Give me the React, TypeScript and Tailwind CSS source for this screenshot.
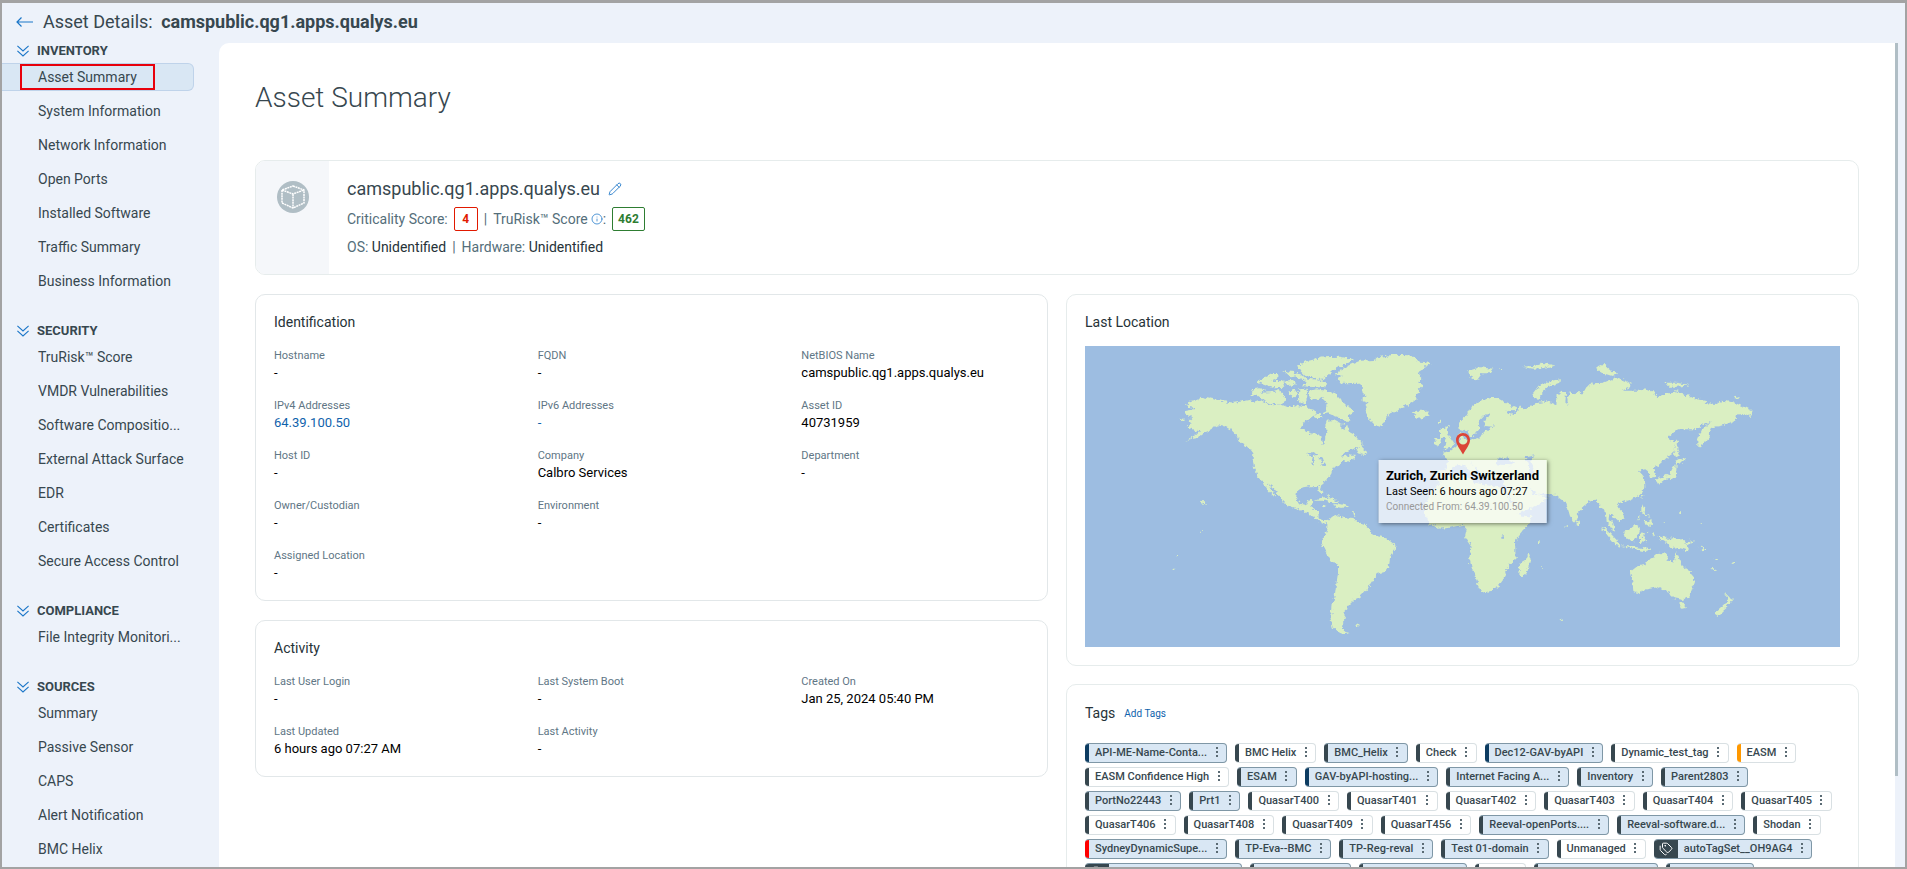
import { useState } from "react"
import { Info, Pencil, Tags as TagsIcon } from "lucide-react"

type NavGroup = { title: string; items: string[] }
type FieldItem = { label: string; value: string; link?: boolean }
type TagItem = { name: string; filled?: boolean; bar?: string; icon?: boolean }

const navGroups: NavGroup[] = [
  {
    title: "INVENTORY",
    items: [
      "Asset Summary",
      "System Information",
      "Network Information",
      "Open Ports",
      "Installed Software",
      "Traffic Summary",
      "Business Information",
    ],
  },
  {
    title: "SECURITY",
    items: [
      "TruRisk™ Score",
      "VMDR Vulnerabilities",
      "Software Compositio...",
      "External Attack Surface",
      "EDR",
      "Certificates",
      "Secure Access Control",
    ],
  },
  { title: "COMPLIANCE", items: ["File Integrity Monitori..."] },
  { title: "SOURCES", items: ["Summary", "Passive Sensor", "CAPS", "Alert Notification", "BMC Helix"] },
]

const identification: FieldItem[] = [
  { label: "Hostname", value: "-" },
  { label: "FQDN", value: "-" },
  { label: "NetBIOS Name", value: "camspublic.qg1.apps.qualys.eu" },
  { label: "IPv4 Addresses", value: "64.39.100.50", link: true },
  { label: "IPv6 Addresses", value: "-", link: true },
  { label: "Asset ID", value: "40731959" },
  { label: "Host ID", value: "-" },
  { label: "Company", value: "Calbro Services" },
  { label: "Department", value: "-" },
  { label: "Owner/Custodian", value: "-" },
  { label: "Environment", value: "-" },
  { label: "", value: "" },
  { label: "Assigned Location", value: "-" },
]

const activity: FieldItem[] = [
  { label: "Last User Login", value: "-" },
  { label: "Last System Boot", value: "-" },
  { label: "Created On", value: "Jan 25, 2024 05:40 PM" },
  { label: "Last Updated", value: "6 hours ago 07:27 AM" },
  { label: "Last Activity", value: "-" },
]

const tags: TagItem[] = [
  { name: "API-ME-Name-Conta...", filled: true, bar: "bg-[#0d3c61]" },
  { name: "BMC Helix" },
  { name: "BMC_Helix", filled: true },
  { name: "Check" },
  { name: "Dec12-GAV-byAPI", filled: true, bar: "bg-[#0d3c61]" },
  { name: "Dynamic_test_tag" },
  { name: "EASM", bar: "bg-[#ff9800]" },
  { name: "EASM Confidence High" },
  { name: "ESAM", filled: true },
  { name: "GAV-byAPI-hosting...", filled: true, bar: "bg-[#0d3c61]" },
  { name: "Internet Facing A...", filled: true },
  { name: "Inventory", filled: true },
  { name: "Parent2803", filled: true },
  { name: "PortNo22443", filled: true },
  { name: "Prt1", filled: true },
  { name: "QuasarT400" },
  { name: "QuasarT401" },
  { name: "QuasarT402" },
  { name: "QuasarT403" },
  { name: "QuasarT404" },
  { name: "QuasarT405" },
  { name: "QuasarT406" },
  { name: "QuasarT408" },
  { name: "QuasarT409" },
  { name: "QuasarT456" },
  { name: "Reeval-openPorts....", filled: true },
  { name: "Reeval-software.d...", filled: true },
  { name: "Shodan" },
  { name: "SydneyDynamicSupe...", filled: true, bar: "bg-[#ff0000]" },
  { name: "TP-Eva--BMC", filled: true },
  { name: "TP-Reg-reval", filled: true },
  { name: "Test 01-domain", filled: true },
  { name: "Unmanaged" },
  { name: "autoTagSet__OH9AG4", filled: true, icon: true },
  { name: "autoTagSet__VEHE7C", filled: true, icon: true },
  { name: "autotestapub1", filled: true },
  { name: "importagsource", filled: true },
  { name: "new" },
  { name: "newPortodiscovery", filled: true },
  { name: "asset27891", filled: true },
]

function Sidebar() {

  const [selected, setSelected] = useState("Asset Summary")

  return (
    <nav className="flex w-[217px] shrink-0 flex-col gap-[23px] overflow-hidden">
      {navGroups.map((group) => (
        <div key={group.title}>
          <button className="flex h-[19px] items-center gap-2 pl-[15px] text-[13px] font-bold">
            <svg viewBox="0 0 12 12" className="size-3" fill="none" stroke="#1b76c8" strokeWidth="1.1" aria-hidden="true">
              <path d="M0.400 0.800 6 6l5.600-5.200M0.400 5.800 6 11l5.600-5.200" />
            </svg>
            {group.title}
          </button>
          {group.items.map((item) => (
            <div key={item} className="py-[3px] pr-[25px]">
              <a
                href="#"
                onClick={() => setSelected(item)}
                className={
                  "flex h-7 items-center rounded-r-md border border-l-0 pl-[18px] text-sm whitespace-nowrap " +
                  (selected === item ? "border-[#bfd3ea] bg-[#d9e7f4]" : "border-transparent")
                }
              >
                <span className={"border-2 px-4 leading-[22px] " + (selected === item ? "border-[#e8000b]" : "border-transparent")}>
                  {item}
                </span>
              </a>
            </div>
          ))}
        </div>
      ))}
    </nav>
  )
}

function FieldGrid({ title, fields }: { title: string; fields: FieldItem[] }) {
  return (
    <section className="rounded-[10px] border border-[#e2e7e9] pt-[17px] pb-[18px]">
      <h2 className="mb-4 pl-[18px] text-sm leading-5 text-[#263238]">{title}</h2>
      <dl className="grid grid-cols-3 gap-y-4">
        {fields.map((field, i) => (
          <div key={i} className="pl-[18px]">
            <dt className="text-[11px] leading-4 text-[#607685]">{field.label}</dt>
            <dd className="text-[13px] leading-[18px] text-black">
              {field.link ? <a href="#" className="text-[#0f62ac]">{field.value}</a> : field.value}
            </dd>
          </div>
        ))}
      </dl>
    </section>
  )
}

function WorldMap() {
  return (
    <svg viewBox="75 180 2265 903" className="block w-full bg-[#9dbde1]" aria-hidden="true">
      <defs>
        <filter id="coast" x="0" y="0" width="100%" height="100%">
          <feTurbulence type="fractalNoise" baseFrequency="0.1" numOctaves="2" seed="4" />
          <feDisplacementMap in="SourceGraphic" scale="16" xChannelSelector="R" yChannelSelector="G" />
        </filter>
      </defs>
      <g fill="#daefc2" filter="url(#coast)">
        {/* North America */}
        <path d="M378 354 392 345 410 342 428 333 452 338 490 345 522 350 548 346 566 342 582 347 596 342 612 350 640 358 662 355 684 364 706 358 722 362 738 356 748 368 764 372 770 384 756 392 744 402 728 410 724 425 742 438 762 444 784 450 788 474 794 470 796 450 802 440 796 420 800 404 820 402 836 410 850 414 862 420 866 436 882 444 896 462 908 470 904 482 868 492 850 504 842 512 866 508 888 510 880 518 862 528 846 524 836 538 822 544 816 556 812 570 798 582 786 594 778 600 790 618 788 628 776 616 774 602 752 600 730 604 712 612 708 636 720 654 738 656 746 640 760 646 754 660 758 670 774 674 776 694 790 706 804 704 794 714 776 706 764 694 748 686 734 676 716 672 692 664 672 652 664 636 648 618 636 602 626 594 634 612 652 636 644 634 628 618 616 602 610 586 598 578 590 562 582 546 578 520 580 502 570 488 556 478 540 468 530 448 514 432 496 422 474 418 462 424 446 434 430 442 410 456 390 460 370 470 386 460 408 448 420 436 402 432 380 422 396 414 386 404 398 392 376 386 376 378 396 374 404 366 384 362Z" />
        <path d="M746 316 768 310 800 314 826 322 846 342 852 356 872 366 880 378 866 386 868 404 850 404 836 394 818 388 800 380 790 382 798 366 800 350 786 336 764 342 750 338Z" />
        <path d="M580 306 600 304 616 312 600 320 640 318 660 312 672 326 676 340 670 354 640 354 618 348 606 338 590 326 574 330Z" />
        <path d="M712 240 740 226 790 214 840 212 882 220 860 234 830 246 812 262 800 272 786 282 760 274 736 270 722 256Z" />
        <path d="M724 276 760 280 798 288 796 304 760 304 726 300 740 290Z" />
        <path d="M588 286 620 272 636 264 655 264 655 276 630 284 670 286 676 302 640 304 610 294Z" />
        <path d="M670 256 704 258 716 270 690 274ZM706 262 730 268 734 280 712 276ZM672 284 696 282 710 296 684 300ZM684 318 704 308 714 324 700 336ZM718 310 740 308 742 330 738 348 722 352 716 336ZM762 386 782 384 784 396 766 396Z" />
        <path d="M890 490 908 478 908 488 922 498 916 508 896 502ZM355 396 372 398 368 404ZM422 644 430 644 438 654 430 656ZM348 810h6v4h-6ZM422 736h4v4h-4ZM338 848h5v4h-5Z" />
        <path d="M764 644 790 634 820 640 838 650 820 652 796 644ZM820 660 836 654 852 656 868 662 844 666ZM786 656 800 660 790 664ZM798 622 812 634 832 642 812 640ZM878 672 888 684 884 696Z" />
        {/* Greenland, Iceland */}
        <path d="M826 264 862 240 900 224 944 222 960 212 1000 206 1048 208 1070 216 1072 226 1118 232 1090 244 1088 252 1072 262 1084 276 1078 290 1090 298 1076 312 1080 320 1066 328 1070 340 1050 354 1022 364 1008 376 988 384 976 400 964 424 944 416 930 402 918 380 916 360 926 352 908 346 908 334 920 330 908 320 904 300 890 290 862 292 836 288 830 276 850 270Z" />
        <path d="M1054 380 1070 374 1100 374 1110 384 1092 396 1070 398 1062 392 1066 386Z" />
        {/* South America */}
        <path d="M802 704 816 694 834 688 852 694 880 696 892 708 914 716 928 726 938 746 962 752 990 762 1006 776 1006 788 990 814 988 836 974 858 950 864 942 880 926 904 914 918 902 920 902 932 880 942 874 954 862 958 862 970 850 980 858 992 850 1008 846 1022 852 1034 866 1038 848 1044 830 1036 818 1024 810 994 816 974 818 952 824 930 828 900 834 860 834 836 812 824 802 806 786 776 786 764 794 750 802 732ZM886 1018 894 1012 900 1018 890 1022Z" />
        {/* Africa */}
        <path d="M1150 575 1180 567 1215 567 1238 580 1240 590 1270 595 1295 600 1320 600 1335 615 1350 645 1370 675 1385 693 1415 690 1410 710 1385 740 1365 765 1367 820 1345 840 1338 855 1332 877 1315 900 1290 915 1265 920 1252 895 1245 865 1235 845 1228 815 1235 780 1215 750 1220 730 1208 717 1170 725 1140 728 1110 715 1095 685 1095 655 1110 625 1130 600Z" />
        <path d="M1406 802 1412 820 1400 862 1388 872 1378 866 1380 834 1396 824Z" />
        {/* British Isles */}
        <path d="M1140 432 1160 420 1164 440 1170 452 1182 470 1176 484 1150 490 1160 472 1152 456 1140 452ZM1126 460 1142 454 1146 470 1134 480 1122 474ZM1136 404h6v6h-6ZM1164 416 1170 416 1166 424Z" />
        <g transform="translate(1200)">
          {/* Eurasia */}
          <path d="M-4 432 -6 410 22 386 38 358 60 344 90 336 112 336 140 352 168 364 166 376 136 374 152 386 174 376 180 358 190 370 230 352 262 346 290 356 288 330 304 314 318 322 316 346 326 364 322 340 330 316 342 328 356 316 366 326 380 302 400 292 430 290 470 274 512 290 510 304 485 314 540 314 550 310 586 318 590 334 620 322 650 320 690 330 710 340 734 344 740 352 770 354 785 344 820 348 850 362 878 376 868 390 850 384 826 386 828 402 800 414 780 420 756 424 746 440 750 450 730 474 712 488 712 462 722 436 740 418 752 408 730 414 708 430 654 430 620 456 645 470 640 500 610 524 592 540 580 548 586 572 570 576 564 556 556 550 536 554 552 572 553 604 540 626 514 640 494 646 480 650 472 662 490 682 492 696 476 706 464 694 448 684 446 698 460 712 466 738 450 724 440 704 436 672 420 664 408 640 390 648 370 664 354 680 352 700 342 710 330 690 318 650 300 638 286 626 262 628 230 622 210 605 220 625 240 625 260 637 240 655 175 683 165 665 150 635 138 605 132 595 130 577 100 582 80 577 85 560 74 562 72 578 62 560 46 544 30 524 50 556 36 566 20 544 8 534 -16 540 -30 556 -34 580 -70 586 -72 556 -40 550 -36 524 -52 500 -30 496 -6 478 0 466 -4 444 10 440 12 462 40 460 62 454 74 434 106 422 74 420 74 404 90 382 72 388 56 404 58 424 44 446 30 454 22 432 10 436Z" />
          <path d="M22 256 60 244 100 248 90 262 66 262 50 284 36 276ZM186 242 220 240 245 230 284 238 250 246 220 248ZM216 328 240 298 270 286 300 280 298 290 262 304 240 326 242 340 224 336ZM405 244 430 234 446 250 476 264 456 270 430 262ZM615 290 650 290 690 298 650 302 625 302ZM638 312 656 314 650 320ZM820 336 838 330 840 338ZM120 246 132 246 124 250Z" />
          {/* Japan and Sakhalin */}
          <path d="M646 458 654 466 652 490 660 508 648 514 642 500ZM654 516 664 520 680 516 662 532 652 534 642 540ZM640 542 650 536 648 570 634 578 612 582 594 596 588 580 610 572 630 562Z" />
          {/* South-east Asia */}
          <path d="M544 628 550 628 546 642ZM544 658 556 664 554 680 572 692 560 690 544 680ZM540 686 530 708 544 690ZM552 704 566 706 574 698 576 720 556 716Z" />
          <path d="M424 722 440 730 470 762 484 782 466 776 444 750ZM476 778 520 782 574 790 556 796 520 788ZM490 738 510 730 528 714 540 722 532 750 518 768 496 756ZM540 744 566 740 548 750 560 770 548 762 540 774ZM576 740 584 738 582 752Z" />
          <path d="M590 752 612 752 624 762 640 754 668 762 680 776 690 796 672 790 650 784 634 786 618 768ZM680 772 694 766 684 756 702 768 684 778ZM716 780 738 790 730 794Z" />
          <path d="M350 702 360 708 360 720 350 718Z" />
          {/* Oceania */}
          <path d="M510 858 530 842 552 836 560 824 582 812 596 800 624 804 622 820 640 830 648 798 658 818 668 840 692 856 704 884 688 934 670 942 640 936 630 918 610 912 596 904 560 910 536 922 520 918 518 890ZM658 948 678 952 676 966 666 968Z" />
          <path d="M796 920 808 934 822 938 812 952 800 958 804 942ZM796 952 804 962 790 974 774 990 762 982ZM752 844 768 852 764 856ZM764 816 774 820 770 828ZM814 832 828 824 822 836ZM298 1000 308 998 306 1006Z" />
          <path d="M658 676h5v8h-5ZM722 712h4v4h-4ZM610 710h4v4h-4ZM234 766h5v5h-5ZM244 843h4v4h-4ZM320 718h4v5h-4Z" />
        </g>
      </g>
      {/* Inland seas and lakes */}
      <g fill="#9dbde1" filter="url(#coast)">
        <path d="M1306 534 1316 514 1332 518 1346 510 1348 522 1366 530 1354 538 1320 536ZM1396 514 1424 508 1412 530 1426 560 1422 574 1408 562 1406 540ZM1324 750 1332 746 1330 758 1324 758Z" />
        <path d="M738 506 760 498 776 506 756 510ZM758 514 766 516 760 536 754 532ZM774 514 794 520 786 530ZM776 538 798 532 794 540ZM844 414 858 418 854 432 844 426Z" />
      </g>
    </svg>
  )
}

function LastLocation() {
  return (
    <section className="rounded-[10px] border border-[#e6ecec] px-[18px] pt-[17px] pb-[18px]">
      <h2 className="mb-[14px] text-sm leading-5 text-[#263238]">Last Location</h2>
      <div className="relative">
        <WorldMap />
        <svg viewBox="0 0 14 22" className="absolute top-[29%] left-1/2 h-[22px] w-[14px] -translate-x-1/2" aria-hidden="true">
          <path
            fillRule="evenodd"
            fill="#db4437"
            d="M7 0C3 0 0 3 0 7c0 4.500 4 9 7 14.500C10 16 14 11.500 14 7c0-4-3-7-7-7Zm0 2.800a4.400 4.400 0 1 1 0 8.800 4.400 4.400 0 0 1 0-8.800Z"
          />
        </svg>
        <div className="absolute top-[38%] left-1/2 -translate-x-1/2 bg-white/70 px-2 pt-2 pb-[9px] whitespace-nowrap shadow-[1px_1px_4px_rgba(0,0,0,0.5)]">
          <p className="text-[13px] leading-4 font-bold text-black">Zurich, Zurich Switzerland</p>
          <p className="text-[11px] leading-[15px] text-black">Last Seen: 6 hours ago 07:27</p>
          <p className="text-[10px] leading-[15px] text-[#999]">Connected From: 64.39.100.50</p>
        </div>
      </div>
    </section>
  )
}

function Tag({ tag }: { tag: TagItem }) {
  return (
    <li
      className={
        "flex h-5 items-stretch overflow-hidden rounded border border-l-0 text-[11px] font-medium " +
        (tag.filled ? "border-[#7f97a6] bg-[#d9e7f4]" : "border-[#d9e0e3] bg-white")
      }
    >
      {tag.icon ? (
        <span className="flex w-6 items-center justify-center bg-[#37474f] text-white">
          <TagsIcon size={14} strokeWidth={1.7} />
        </span>
      ) : (
        <span className={"w-1 " + (tag.bar ?? "bg-[#37474f]")} />
      )}
      <span className="pl-[6px] leading-[18px]">{tag.name}</span>
      <button aria-label={"Options for " + tag.name} className="flex w-[19px] items-center justify-center pb-[2px]">
        <svg viewBox="0 0 2 10" className="h-[10px] w-[2px]" fill="#5b6b74">
          <rect width="2" height="2" />
          <rect y="4" width="2" height="2" />
          <rect y="8" width="2" height="2" />
        </svg>
      </button>
    </li>
  )
}

function App() {
  return (
    <div className="flex h-screen flex-col overflow-hidden border-2 border-t-3 border-[#a3a3a3] bg-[#edf2fa] font-[Roboto,sans-serif] text-[#37474f]">

      <header className="flex h-[38px] shrink-0 items-center gap-[10px] pl-[14px] text-lg">
        <a href="#" aria-label="Back">
          <svg viewBox="0 0 17 10" className="h-[10px] w-[17px]" fill="none" stroke="#1b76c8" strokeWidth="1.2">
            <path d="M17 5H1M5.500 0.500 1 5l4.500 4.500" />
          </svg>
        </a>
        <h1>Asset Details: <span className="ml-1 font-bold">camspublic.qg1.apps.qualys.eu</span></h1>
      </header>

      <div className="flex min-h-0 flex-1">
        <Sidebar />

        <main className="mt-[2px] min-w-0 flex-1 overflow-hidden rounded-tl-[10px] bg-white px-9 pt-[35px]">
          <h2 className="text-[28px] leading-10 font-light">Asset Summary</h2>

          <section className="mt-[42px] flex h-[115px] overflow-hidden rounded-[10px] border border-[#e6ecec]">
            <div className="flex w-[73px] shrink-0 justify-center bg-[#f5f7fa] pt-5">
              <svg viewBox="0 0 32 32" className="size-8" fill="none" aria-hidden="true">
                <circle cx="16" cy="16" r="16" fill="#b0bec5" />
                <path d="M16 5 27 9v13L16 27 5 22V9ZM5 9l11 4 11-4M16 13v14" stroke="#fff" strokeWidth="1.500" strokeLinejoin="round" strokeDasharray="2 0.600" />
              </svg>
            </div>
            <div className="pt-4 pl-[18px] text-sm text-[#546e7a]">
              <div className="flex h-6 items-center gap-2 text-lg text-[#37474f]">
                camspublic.qg1.apps.qualys.eu
                <button aria-label="Edit name" className="text-[#1b76c8]"><Pencil size={14} strokeWidth={1.5} /></button>
              </div>
              <div className="mt-[6px] flex h-6 items-center gap-[6px]">
                <span>Criticality Score:</span>
                <span className="flex h-6 w-6 items-center justify-center rounded-[2px] border border-[#e11900] text-xs font-bold text-[#e11900]">4</span>
                <span>|</span>
                <span className="flex items-center">TruRisk™ Score <Info size={12} strokeWidth={1.5} className="ml-[3px] text-[#1b76c8]" />:</span>
                <span className="flex h-6 items-center rounded-[2px] border border-[#2e7d32] px-[5px] text-xs font-bold text-[#2e7d32]">462</span>
              </div>
              <div className="mt-[6px] flex h-5 items-center gap-[6px]">
                <span>OS: <span className="text-[#263238]">Unidentified</span></span>
                <span>|</span>
                <span>Hardware: <span className="text-[#263238]">Unidentified</span></span>
              </div>
            </div>
          </section>

          <div className="mt-[19px] grid grid-cols-2 items-start gap-[18px]">
            <div className="flex flex-col gap-[19px]">
              <FieldGrid title="Identification" fields={identification} />
              <FieldGrid title="Activity" fields={activity} />
            </div>

            <div className="flex flex-col gap-[18px]">
              <LastLocation />
              <section className="rounded-[10px] border border-[#e6ecec] px-[18px] pt-[18px] pb-[18px]">
                <div className="flex items-center gap-[9px]">
                  <h2 className="text-sm leading-5 text-[#263238]">Tags</h2>
                  <a href="#" className="text-[10px] text-[#0f62ac]">Add Tags</a>
                </div>
                <ul className="mt-[20px] flex flex-wrap gap-x-2 gap-y-1">
                  {tags.map((tag) => (
                    <Tag key={tag.name} tag={tag} />
                  ))}
                </ul>
              </section>
            </div>
          </div>
        </main>

        <div className="mt-[2px] w-[10px] shrink-0">
          <div className="h-[89%] w-[3px] bg-[#b0bec5]" />
        </div>
      </div>
    </div>
  )
}

export default App
